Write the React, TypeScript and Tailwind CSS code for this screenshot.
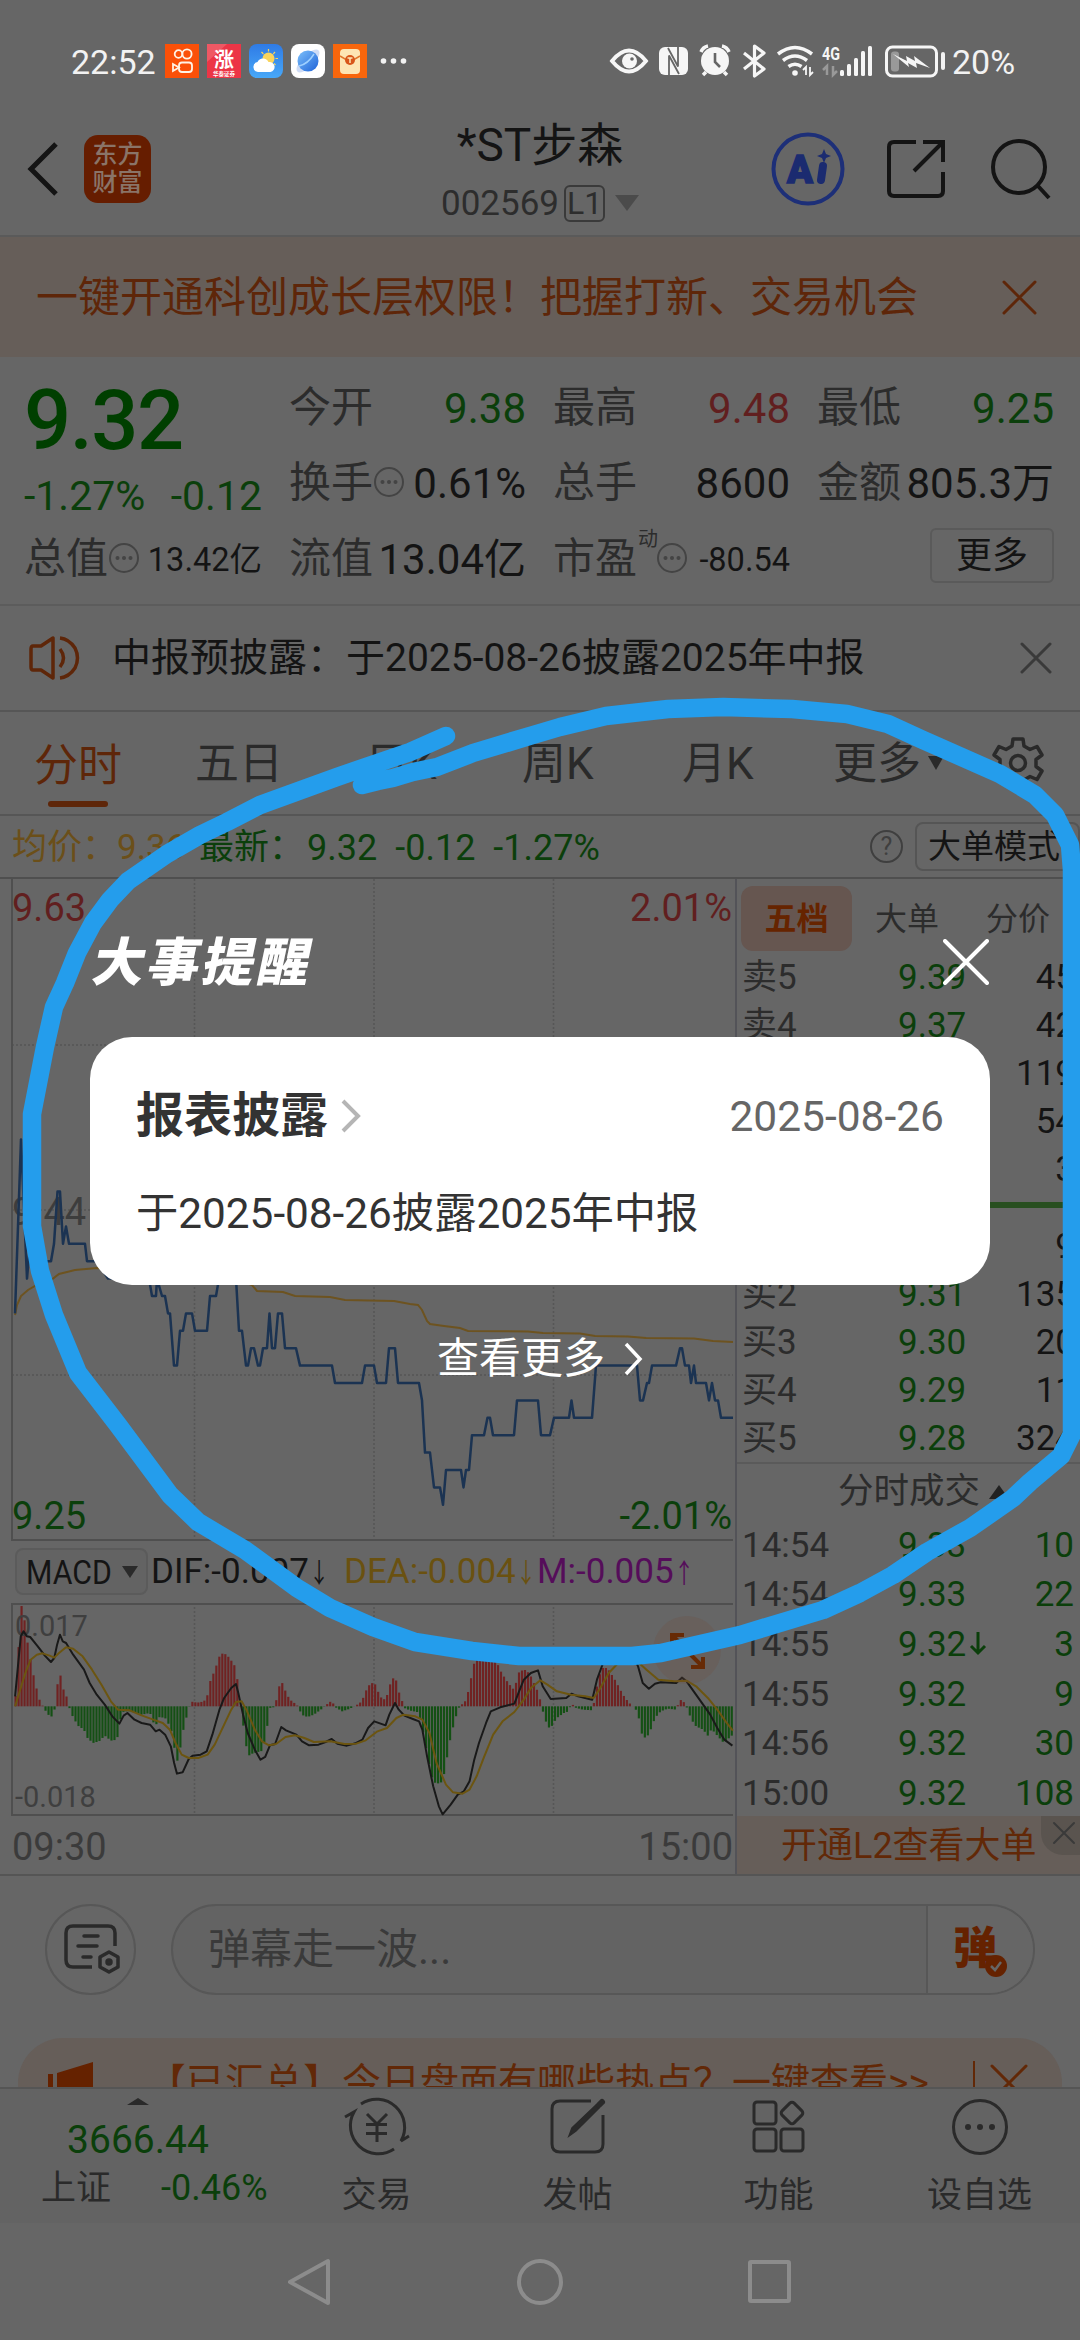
import React from 'react';

type Point = [number, number];

const UP = '#611f1f';
const DOWN = '#0b3f0b';

/* ---------------------------------- data ---------------------------------- */

// [x, ticks below the previous close]
const PRICE: Point[] = [
   [15, 6], [21, -4], [24, 0], [27, 4], [30, 2], [38, 3], [51, 3], [54, 2], [57.5, -1], [60, -1],
   [63, 2], [66, 1], [69, 2], [85, 2], [87, 3], [97, 3], [108, 4], [149, 4], [152, 5], [156, 5],
   [157, 4], [162, 5], [165, 5], [168, 6], [170, 6], [174, 9], [177, 9], [180, 7], [183, 7],
   [186, 6], [192, 6], [195, 7], [207, 7], [210, 5], [216, 5], [219, 4], [236, 4], [239, 7],
   [242, 7], [246, 9], [248, 9], [251, 8], [254, 8], [258, 9], [260, 9], [263, 8], [267, 8],
   [269.5, 6], [272, 8], [275, 8], [278, 6], [282, 6], [285, 8], [296, 8], [300, 9], [332, 9],
   [335, 10], [362, 10], [365, 9], [374, 9], [377, 10], [386, 10], [389, 8], [395, 8], [398, 10],
   [419, 10], [422, 11], [425, 14], [430, 14], [434, 16], [440, 16], [443, 17], [446, 15],
   [461, 15], [463.5, 16], [466, 15], [469, 15], [472, 13], [484, 13], [487.5, 12], [490, 12],
   [493, 13], [514, 13], [517, 11], [538, 11], [541, 13], [550, 13], [554, 12], [569, 12],
   [571.5, 11], [574, 12], [592, 12], [596, 9], [637, 9], [640, 11], [643, 11], [647, 10],
   [649, 10], [652, 9], [676, 9], [680, 8], [682, 8], [685, 9], [689, 9], [691, 10], [694, 9],
   [696, 10], [706, 10], [709, 11], [712, 10], [715, 11], [718, 11], [721, 12], [733, 12],
];

const AVERAGE: Point[] = [
   [15, 436], [17, 426], [21, 417], [28, 411], [35, 407], [46, 405], [59, 395], [75, 391],
   [97, 389], [190, 397], [236, 400], [252, 406], [257, 412], [283, 413], [295, 417], [330, 418],
   [345, 421], [394, 422], [410, 425], [418, 426], [422, 431], [427, 442], [430, 445], [444, 447],
   [460, 449], [468, 452], [528, 452.5], [543, 454], [580, 454.5], [595, 457], [628, 457.5],
   [646, 459], [694, 459.5], [713, 462], [733, 463],
];

// MACD pane uses a 1568 x 635 drawing space, zero line at 310
const BARS: Point[] = [
   [32, 300], [38, 170], [44, 2], [50, 27], [56, 100], [63, 155], [70, 210], [82, 285], [89, 305],
   [95, 320], [101, 333], [108, 343], [114, 330], [117, 310], [121, 250], [127, 208], [133, 255],
   [140, 275], [146, 310], [152, 335], [165, 368], [178, 380], [184, 403], [197, 420], [210, 415],
   [222, 398], [235, 413], [248, 410], [255, 350], [262, 325], [275, 325], [300, 335], [318, 330],
   [325, 358], [331, 365], [338, 342], [350, 345], [362, 375], [369, 430], [375, 478], [381, 445],
   [387, 390], [393, 355], [400, 315], [406, 296], [418, 299], [430, 296], [438, 288], [444, 240],
   [457, 195], [463, 165], [469, 152], [476, 152], [482, 158], [495, 182], [501, 200], [507, 290],
   [513, 340], [520, 415], [526, 460], [532, 452], [539, 452], [545, 445], [552, 450], [558, 430],
   [565, 385], [571, 315], [583, 312], [589, 262], [596, 232], [602, 255], [610, 280], [620, 298],
   [628, 302], [635, 323], [643, 338], [652, 342], [665, 335], [680, 320], [690, 307], [703, 293],
   [710, 312], [725, 325], [740, 318], [755, 307], [767, 295], [774, 267], [783, 245], [793, 237],
   [800, 262], [806, 282], [818, 292], [824, 252], [837, 215], [843, 258], [850, 285], [857, 315],
   [870, 323], [887, 328], [893, 365], [900, 410], [906, 462], [918, 538], [931, 542], [938, 535],
   [945, 485], [951, 430], [957, 390], [964, 352], [970, 322], [977, 302], [983, 307], [989, 278],
   [995, 255], [1001, 200], [1007, 170], [1014, 145], [1040, 125], [1050, 170], [1063, 210],
   [1077, 240], [1090, 262], [1098, 210], [1109, 200], [1116, 202], [1125, 220], [1141, 270],
   [1147, 305], [1153, 340], [1160, 368], [1166, 378], [1173, 360], [1180, 345], [1195, 330],
   [1205, 325], [1211, 298], [1217, 313], [1235, 320], [1256, 322], [1262, 270], [1268, 230],
   [1275, 195], [1287, 195], [1294, 210], [1305, 235], [1320, 275], [1332, 298], [1345, 315],
   [1352, 330], [1357, 375], [1363, 407], [1375, 395], [1388, 345], [1400, 325], [1415, 317],
   [1433, 320], [1438, 300], [1445, 287], [1452, 305], [1458, 320], [1464, 348], [1475, 370],
   [1490, 380], [1500, 398], [1508, 378], [1520, 398], [1534, 420], [1545, 405], [1553, 395],
];

const DIF: Point[] = [
   [32, 280], [38, 190], [44, 100], [50, 85], [57, 100], [64, 102], [80, 130], [95, 158],
   [108, 177], [115, 165], [121, 125], [127, 95], [133, 115], [140, 120], [155, 155], [178, 200],
   [190, 240], [205, 275], [222, 305], [238, 340], [253, 362], [262, 338], [270, 330], [285, 350],
   [300, 360], [318, 365], [330, 385], [338, 380], [350, 395], [362, 430], [369, 480], [375, 512],
   [387, 508], [400, 468], [408, 458], [425, 455], [438, 445], [450, 395], [465, 320], [475, 285],
   [490, 255], [500, 243], [505, 270], [515, 335], [525, 390], [540, 440], [552, 470], [562, 462],
   [572, 427], [583, 423], [596, 372], [606, 382], [628, 395], [640, 415], [655, 427], [675, 425],
   [690, 417], [703, 408], [715, 422], [735, 428], [755, 420], [768, 410], [780, 375], [793, 355],
   [817, 367], [825, 335], [837, 300], [845, 320], [857, 338], [875, 348], [888, 355], [895, 380],
   [905, 460], [918, 550], [930, 610], [938, 634], [955, 605], [970, 575], [983, 565], [995, 535],
   [1005, 470], [1015, 420], [1030, 360], [1040, 325], [1060, 313], [1090, 302], [1100, 265],
   [1110, 230], [1125, 210], [1140, 202], [1150, 250], [1167, 288], [1200, 285], [1211, 272],
   [1225, 280], [1255, 290], [1265, 230], [1278, 180], [1300, 140], [1340, 150], [1352, 190],
   [1362, 240], [1375, 257], [1388, 242], [1400, 238], [1433, 240], [1445, 224], [1455, 235],
   [1470, 265], [1490, 305], [1505, 335], [1520, 375], [1535, 410], [1552, 428],
];

const DEA: Point[] = [
   [32, 310], [45, 250], [55, 205], [65, 170], [78, 155], [90, 151], [105, 158], [115, 164],
   [125, 150], [140, 133], [155, 137], [175, 160], [195, 200], [215, 245], [235, 295], [250, 320],
   [275, 322], [300, 337], [325, 350], [345, 360], [360, 380], [372, 420], [385, 455], [400, 465],
   [420, 465], [440, 455], [455, 425], [475, 365], [490, 320], [500, 297], [512, 295], [522, 320],
   [540, 380], [555, 415], [570, 427], [585, 423], [605, 402], [625, 397], [645, 405], [665, 417],
   [700, 415], [730, 423], [755, 422], [775, 412], [800, 385], [820, 375], [840, 345], [855, 335],
   [880, 340], [895, 350], [910, 390], [925, 480], [945, 545], [960, 568], [980, 572], [995, 560],
   [1010, 520], [1025, 465], [1045, 395], [1065, 355], [1090, 327], [1110, 290], [1125, 255],
   [1145, 232], [1160, 245], [1180, 265], [1210, 275], [1240, 280], [1258, 285], [1270, 260],
   [1290, 210], [1310, 180], [1350, 175], [1370, 200], [1395, 230], [1430, 235], [1455, 233],
   [1475, 250], [1500, 285], [1520, 320], [1540, 360], [1553, 383],
];

const SELL = [
   ['卖5', '9.39', '45'],
   ['卖4', '9.37', '42'],
   ['卖3', '9.36', '119'],
   ['卖2', '9.35', '54'],
   ['卖1', '9.34', '3'],
];

const BUY = [
   ['买1', '9.32', '9'],
   ['买2', '9.31', '135'],
   ['买3', '9.30', '20'],
   ['买4', '9.29', '11'],
   ['买5', '9.28', '324'],
];

const TRADES = [
   ['14:54', '9.33', '10'],
   ['14:54', '9.33', '22'],
   ['14:55', '9.32', '3'],
   ['14:55', '9.32', '9'],
   ['14:56', '9.32', '30'],
   ['15:00', '9.32', '108'],
];

const toPoints = (list: Point[]) => list.map((p) => p.join(',')).join(' ');

const valueAt = (list: Point[], x: number) => {
   for (let i = 1; i < list.length; i++) {
      const [x0, y0] = list[i - 1];
      const [x1, y1] = list[i];
      if (x <= x1) return y0 + ((y1 - y0) * (x - x0)) / (x1 - x0);
   }
   return list[list.length - 1][1];
};

/* ---------------------------------- icons --------------------------------- */

interface CrossProps {
   size: number;
   color: string;
   width?: number;
}

const Cross: React.FC<CrossProps> = ({ size, color, width = 3 }) => (
   <svg width={size} height={size} viewBox={`0 0 ${size} ${size}`} className="shrink-0">
      <path
         d={`M2 2L${size - 2} ${size - 2}M${size - 2} 2L2 ${size - 2}`}
         stroke={color}
         strokeWidth={width}
         strokeLinecap="round"
      />
   </svg>
);

const InfoDots: React.FC = () => (
   <svg width="32" height="32" viewBox="0 0 32 32" className="shrink-0">
      <circle cx="16" cy="16" r="14" fill="none" stroke="#444" strokeWidth="2" />
      <g fill="#444">
         <circle cx="9.5" cy="16" r="2" />
         <circle cx="16" cy="16" r="2" />
         <circle cx="22.5" cy="16" r="2" />
      </g>
   </svg>
);

const AppIcons: React.FC = () => (
   <svg width="244" height="34" viewBox="0 0 244 34" className="ml-[10px]">
      <defs>
         <linearGradient id="sky" x1="0" y1="0" x2="0" y2="1">
            <stop offset="0" stopColor="#2f7be6" />
            <stop offset="1" stopColor="#48a8f8" />
         </linearGradient>
         <linearGradient id="globe" x1="0" y1="0" x2="1" y2="1">
            <stop offset="0" stopColor="#7cc0fb" />
            <stop offset="1" stopColor="#1e62d8" />
         </linearGradient>
      </defs>
      {/* camera */}
      <rect width="34" height="34" fill="#fb5008" />
      <g fill="none" stroke="#fff3e6" strokeWidth="1.8">
         <circle cx="13.5" cy="10" r="3.8" />
         <circle cx="22" cy="10" r="4.6" />
         <rect x="14" y="18.5" width="13" height="9.5" rx="3" />
         <path d="M14 23.5l-6-3.5v7z" />
      </g>
      {/* rising */}
      <rect x="42" width="34" height="34" fill="#ec3546" />
      <path d="M42 0h20L42 18z" fill="#f27078" opacity=".6" />
      <text x="59" y="23" textAnchor="middle" fontSize="20" fontWeight="700" fill="#fff">涨</text>
      <text x="59" y="31.5" textAnchor="middle" fontSize="5.5" fontWeight="700" fill="#fff">华泰证券</text>
      {/* weather */}
      <rect x="84" width="34" height="34" rx="8" fill="url(#sky)" />
      <circle cx="103.5" cy="14.5" r="6" fill="#f9d45c" />
      <path
         d="M103.5 5v2.5M110 8l-1.7 1.900M96.5 8l1.8 1.900M113 14.5h-2.5M110.5 21l-1.5-1.5"
         stroke="#f9d45c"
         strokeWidth="1.2"
      />
      <path d="M93 28a5 5 0 0 1-.5-9.900A6 6 0 0 1 103.500 18a5 5 0 0 1 2 10z" fill="#fff" />
      {/* browser */}
      <rect x="126" width="34" height="34" rx="8" fill="#fff" />
      <ellipse cx="143" cy="17" rx="15" ry="6" fill="#cfdcf5" transform="rotate(-45 143 17)" />
      <circle cx="143" cy="17" r="10.5" fill="url(#globe)" />
      <path d="M134 22q9-2 15-12" stroke="#9ed0ff" strokeWidth="1.5" fill="none" />
      {/* red packet */}
      <rect x="168" width="34" height="34" fill="#f8660c" />
      <rect x="175" y="5" width="20" height="25" rx="4" fill="#fde5b4" />
      <path d="M175 12l10 6 10-6" stroke="#e0762c" strokeWidth="1.5" fill="none" />
      <circle cx="185" cy="16" r="5" fill="#d8561a" />
      <path d="M182.5 14h5M185 14v5" stroke="#fde5b4" strokeWidth="1.5" />
      {/* more */}
      <g fill="#f2f2f2">
         <circle cx="218.5" cy="17" r="2.8" />
         <circle cx="228.5" cy="17" r="2.8" />
         <circle cx="238.5" cy="17" r="2.8" />
      </g>
   </svg>
);

const SystemIcons: React.FC = () => (
   <svg width="340" height="50" viewBox="0 0 340 50" fill="none" stroke="#f6f6f6" strokeWidth="3.5">
      {/* eye */}
      <path d="M11 25Q28 4 45 25Q28 46 11 25z" strokeWidth="3.8" />
      <circle cx="28.5" cy="25" r="7.5" fill="#f6f6f6" stroke="none" />
      <circle cx="31" cy="23" r="1.8" fill="#666" stroke="none" />
      {/* nfc */}
      <rect x="58" y="11" width="29" height="28" rx="6" fill="#f6f6f6" stroke="none" />
      <path d="M68 39V19.5l10 18.5M77 11v19.5L67 12" stroke="#666" strokeWidth="1.8" />
      {/* alarm */}
      <circle cx="114" cy="25" r="14" fill="#f6f6f6" stroke="none" />
      <path d="M114 17v9l5 5" stroke="#666" strokeWidth="2.6" />
      <path d="M100 16q2-5 7-6M128 16q-2-5-7-6M105 36l-3 3M123 36l3 3" />
      {/* bluetooth */}
      <path d="M143 17l20 16-9.5 7V10l9.5 7-20 16" strokeWidth="3.2" strokeLinejoin="round" />
      {/* wifi */}
      <path d="M177 18q17-13 34 0M182 24.5q12-9 24 0M187.5 30.5q6.5-4.5 13 0" />
      <circle cx="194" cy="37" r="2.8" fill="#f6f6f6" stroke="none" />
      <path d="M205 39v-8l-3 3M209 31v8l3-3" strokeWidth="1.8" />
      {/* mobile signal */}
      <text x="221" y="24" fontSize="18" fontWeight="700" fill="#f6f6f6" stroke="none" textLength="18" lengthAdjust="spacingAndGlyphs">4G</text>
      <path d="M226 39v-9l-4 4M232 30v9l4-4" stroke="#999" strokeWidth="2.5" />
      <g fill="#f6f6f6" stroke="none">
         <rect x="239" y="34" width="4" height="6" rx="1.5" />
         <rect x="246" y="28" width="4" height="12" rx="1.5" />
         <rect x="253" y="22" width="4" height="18" rx="1.5" />
         <rect x="260" y="15" width="4" height="25" rx="1.5" />
         <rect x="267" y="10" width="4" height="30" rx="1.5" />
      </g>
      {/* battery */}
      <rect x="285.5" y="11" width="50" height="29" rx="6" strokeWidth="3" />
      <rect x="290" y="15.5" width="8" height="20" rx="3" fill="#999" stroke="none" />
      <path d="M292 18l14 7-1-5 9 5-1-5 16 12-14-5 1 5-9-5 1 4z" fill="#f6f6f6" stroke="none" />
   </svg>
);

/* --------------------------------- sections -------------------------------- */

const StatusBar: React.FC = () => (
   <div className="flex h-[86px] shrink-0 items-center pt-9 text-[#f2f2f2]">
      <span className="ml-[71px] w-[84px] pt-px text-[34px]">22:52</span>
      <AppIcons />
      <div className="ml-[192px] flex items-center">
         <SystemIcons />
         <span className="h-[18px] w-1 rounded bg-[#f2f2f2]" />
         <span className="ml-[7px] pt-[2px] text-[34px]">20%</span>
      </div>
   </div>
);

const Header: React.FC = () => (
   <div className="flex h-[151px] shrink-0 items-center border-b-2 border-[#5a5a5a] pt-[16px]">
      <svg width="34" height="56" viewBox="0 0 34 56" className="ml-[26px]">
         <path d="M30 3L5 28l25 25" fill="none" stroke="#141414" strokeWidth="5" />
      </svg>
      <div className="ml-6 flex h-[68px] w-[67px] flex-col items-center justify-center rounded-[14px] bg-[#661d00] text-[25px] font-medium leading-[28px] text-[#8a7468]">
         <span>东方</span>
         <span>财富</span>
      </div>
      <div className="ml-[229px] flex w-[320px] flex-col items-center pt-[6px]">
         <span className="text-[46px] text-[#141414]">*ST步森</span>
         <div className="mt-[17px] flex items-center text-[35px] text-[#2d2d2d]">
            002569
            <span className="ml-[5px] flex h-[37px] w-[41px] items-center justify-center rounded-md border-2 border-[#3a3a3a] text-[32px]">
               L1
            </span>
            <svg width="24" height="16" viewBox="0 0 24 16" className="ml-[10px]">
               <path d="M0 0h24L12 16z" fill="#4b4b4b" />
            </svg>
         </div>
      </div>
      <svg width="76" height="76" viewBox="0 0 76 76" className="ml-[70px]">
         <circle cx="38" cy="38" r="34.5" fill="none" stroke="#1d2f78" strokeWidth="4" />
         <text x="30" y="52" textAnchor="middle" fontSize="38" fontWeight="900" fill="#1b2b70" stroke="#1b2b70" strokeWidth="1.5">A</text>
         <path d="M53 35l-2 14" stroke="#1b2b70" strokeWidth="8" strokeLinecap="round" />
         <path d="M54 18l2 5 5 2-5 2-2 5-2-5-5-2 5-2z" fill="#1b2b70" />
      </svg>
      <svg width="62" height="62" viewBox="0 0 62 62" className="ml-[39px]" fill="none" stroke="#141414" strokeWidth="4">
         <path d="M31 4H9Q4 4 4 9v44q0 5 5 5h44q5 0 5-5V34" />
         <path d="M38 4h20v20M58 4L29 33" />
      </svg>
      <svg width="64" height="64" viewBox="0 0 64 64" className="ml-[42px]" fill="none" stroke="#141414" strokeWidth="4">
         <circle cx="30" cy="30" r="26" />
         <path d="M49 49l11 12" />
      </svg>
   </div>
);

const Promo: React.FC = () => (
   <div className="flex h-[120px] shrink-0 items-center justify-between bg-[#665e59] pl-[36px] pr-[43px] text-[42px] text-[#5e2609]">
      <span className="pt-[2px]">一键开通科创成长层权限！把握打新、交易机会</span>
      <Cross size={35} color="#5e2609" />
   </div>
);

interface QuoteCellProps {
   label: string;
   value: string;
   color?: string;
   info?: boolean;
   small?: boolean;
   mark?: string;
}

const QuoteCell: React.FC<QuoteCellProps> = ({ label, value, color = '#141414', info, small, mark }) => (
   <div className="flex h-[75.5px] items-center">
      <span className="pt-[2px] text-[42px] text-[#2c2c2c]">{label}</span>
      {mark && <span className="-mr-[2px] mb-[38px] ml-px text-[20px] text-[#2c2c2c]">{mark}</span>}
      {info && <InfoDots />}
      <span className={small ? 'ml-auto pt-1 text-[32.5px]' : 'ml-auto pt-1 text-[42px]'} style={{ color }}>
         {value}
      </span>
   </div>
);

const Quote: React.FC = () => (
   <div className="grid h-[249px] shrink-0 grid-cols-[238px_237px_237px_237px] gap-x-[27px] border-b-2 border-[#5c5c5c] pl-[24px] pt-[12px]">
      <div>
         <div className="flex h-[102px] items-center text-[83px] font-medium tracking-[-1.5px] text-[#003f00]">9.32</div>
         <div className="flex h-[49px] items-center justify-between pt-[2px] text-[41px] text-[#0b3f0b]">
            <span>-1.27%</span>
            <span>-0.12</span>
         </div>
         <QuoteCell label="总值" value="13.42亿" info small />
      </div>
      <div>
         <QuoteCell label="今开" value="9.38" color={DOWN} />
         <QuoteCell label="换手" value="0.61%" info />
         <QuoteCell label="流值" value="13.04亿" />
      </div>
      <div>
         <QuoteCell label="最高" value="9.48" color={UP} />
         <QuoteCell label="总手" value="8600" />
         <QuoteCell label="市盈" mark="动" value="-80.54" info small />
      </div>
      <div>
         <QuoteCell label="最低" value="9.25" color={DOWN} />
         <QuoteCell label="金额" value="805.3万" />
         <div className="ml-auto mt-[8px] flex h-[55px] w-[124px] items-center justify-center rounded-md border-2 border-[#5a5a5a] text-[36px] text-[#141414]">
            更多
         </div>
      </div>
   </div>
);

const Notice: React.FC = () => (
   <div className="flex h-[106px] shrink-0 items-center border-b-2 border-[#565656] text-[39px] text-[#141414]">
      <svg width="54" height="48" viewBox="0 0 54 48" className="ml-[29px]" fill="none" stroke="#5e2609" strokeWidth="3.5">
         <path d="M4 12h8L24 4v40L12 36H4q-2 0-2-3V15q0-3 2-3z" strokeLinejoin="round" />
         <path d="M31 15q7 9 0 18M31 4q9 1 15 10 5 10 0 20-6 9-15 10" />
      </svg>
      <span className="ml-[29px] pt-px">中报预披露：于2025-08-26披露2025年中报</span>
      <span className="ml-auto mr-[28px]">
         <Cross size={32} color="#3a3a3a" />
      </span>
   </div>
);

const Tabs: React.FC = () => (
   <div className="flex h-[104px] shrink-0 items-center border-b-2 border-[#565656] text-[44px] text-[#2a2a2a]">
      <div className="ml-[34px] flex h-full w-[88px] flex-col items-center pt-[32px] text-[#5e2609]">
         <span>分时</span>
         <span className="mt-[13px] h-[6px] w-[60px] rounded bg-[#5e2609]" />
      </div>
      <span className="ml-[73px] w-[170px] pt-[2px]">五日</span>
      <span className="w-[157px] pt-[2px]">日K</span>
      <span className="w-[160px] pt-[2px]">周K</span>
      <span className="w-[151px] pt-[2px]">月K</span>
      <span className="pt-[2px]">更多</span>
      <svg width="16" height="14" viewBox="0 0 16 14" className="ml-[7px]">
         <path d="M0 0h16L8 14z" fill="#2a2a2a" />
      </svg>
      <svg width="54" height="54" viewBox="0 0 54 54" className="ml-[47px]" fill="none" stroke="#2a2a2a" strokeWidth="3.5" strokeLinejoin="round">
         <path d="M22 3h10l1 7 6 3.5 7-3 5 8.5-6 4.5v7l6 4.5-5 8.5-7-3-6 3.5-1 7H22l-1-7-6-3.5-7 3L3 35l6-4.5v-7L3 19l5-8.5 7 3 6-3.5z" />
         <circle cx="27" cy="27" r="7.5" />
      </svg>
   </div>
);

const InfoRow: React.FC = () => (
   <div className="flex h-[63px] shrink-0 items-center overflow-hidden border-b-2 border-[#4f4f4f] text-[35px]">
      <span className="ml-[12px] w-[187px] pt-[2px] text-[#6b4f19]">均价：9.36</span>
      <span className="pt-[2px] text-[#0b3f0b]">最新：</span>
      <span className="ml-[3px] pt-[2px] text-[36px] text-[#0b3f0b]">9.32</span>
      <span className="ml-[18px] pt-[2px] text-[36px] text-[#0b3f0b]">-0.12</span>
      <span className="ml-[18px] pt-[2px] text-[36px] text-[#0b3f0b]">-1.27%</span>
      <span className="ml-auto flex h-[33px] w-[33px] items-center justify-center rounded-full border-2 border-[#3f3f3f] text-[25px] text-[#3f3f3f]">
         ?
      </span>
      <span className="ml-[12px] flex h-[49px] w-[165px] shrink-0 items-center rounded-lg border-2 border-[#555] pl-[11px] text-[33px] text-[#141414]">
         大单模式
      </span>
   </div>
);

const PriceChart: React.FC = () => (
   <svg width="735" height="662" viewBox="0 0 735 662" className="block shrink-0" fill="none">
      <g stroke="#565656" strokeWidth="1.5" strokeDasharray="2 2">
         <path d="M194.5 0v662M374 0v662M553.5 0v662M12 166h721M12 331h721M12 496h721" />
      </g>
      <path d="M12 0v661h721" stroke="#4f4f4f" strokeWidth="2" />
      <text x="12" y="346" fontSize="38" fill="#3d3d3d">9.44</text>
      <polyline points={toPoints(AVERAGE)} stroke="#6d5320" strokeWidth="2" />
      <polyline
         points={toPoints(PRICE.map(([x, n]) => [x, 330 + n * 17.4] as Point))}
         stroke="#1b3352"
         strokeWidth="2.5"
         strokeLinejoin="round"
      />
      <g fontSize="38">
         <text x="12" y="42" fill={UP}>9.63</text>
         <text x="732" y="42" fill={UP} textAnchor="end">2.01%</text>
         <text x="12" y="650" fill={DOWN}>9.25</text>
         <text x="732" y="650" fill={DOWN} textAnchor="end">-2.01%</text>
      </g>
   </svg>
);

const MacdChart: React.FC = () => {
   const bars = Array.from({ length: 240 }, (_, i) => 33 + i * 6.35);

   return (
      <svg width="735" height="214" viewBox="0 0 735 214" className="block shrink-0" fill="none">
         <path d="M194.5 0v212M374 0v212M553.5 0v212" stroke="#565656" strokeWidth="1.5" strokeDasharray="2 2" />
         <path d="M733 1H12v211h721" stroke="#4f4f4f" strokeWidth="2" />
         <g transform="scale(.4719 .3333)">
            {bars.map((x) => {
               const y = valueAt(BARS, x);
               return <path key={x} d={`M${x} 310V${y}`} stroke={y < 310 ? '#702222' : '#145014'} strokeWidth="4.6" />;
            })}
         </g>
         <text x="15" y="33" fontSize="29" fill="#3f3f3f">0.017</text>
         <text x="15" y="204" fontSize="29" fill="#3f3f3f">-0.018</text>
         <g transform="scale(.4719 .3333)" strokeWidth="2" strokeLinejoin="round">
            <polyline points={toPoints(DIF)} stroke="#191919" vectorEffect="non-scaling-stroke" />
            <polyline points={toPoints(DEA)} stroke="#6c5510" vectorEffect="non-scaling-stroke" />
         </g>
         <circle cx="687" cy="47" r="34" fill="#71513f" opacity=".25" />
         <path d="M672 42V32h12M672 32l12 12M703 54v10h-12M703 64L691 52" stroke="#672a05" strokeWidth="4" />
      </svg>
   );
};

const Arrow: React.FC<{ children: string }> = ({ children }) => (
   <span className="inline-block w-[16px] origin-left scale-x-75 text-[27px]">{children}</span>
);

const ChartColumn: React.FC = () => (
   <div className="flex w-[735px] shrink-0 flex-col">
      <PriceChart />
      <div className="flex h-[62px] shrink-0 items-center pb-px text-[35px] text-[#141414]">
         <div className="ml-[15px] flex h-[47px] w-[133px] shrink-0 items-center rounded-lg border-2 border-[#5b5b5b] bg-[#636363] pl-[9px] text-[34px]">
            <span className="w-[96px] origin-left scale-x-[0.89]">MACD</span>
            <svg width="16" height="12" viewBox="0 0 16 12">
               <path d="M0 0h16L8 12z" fill="#2a2a2a" />
            </svg>
         </div>
         <span className="ml-[3px] w-[193px] shrink-0 whitespace-nowrap">DIF:-0.007<Arrow>↓</Arrow></span>
         <span className="w-[193px] shrink-0 whitespace-nowrap text-[#6a5110]">DEA:-0.004<Arrow>↓</Arrow></span>
         <span className="whitespace-nowrap text-[#550d5a]">M:-0.005<Arrow>↑</Arrow></span>
      </div>
      <MacdChart />
      <div className="flex flex-1 items-center justify-between pl-[12px] pr-[2px] pt-[2px] text-[38px] text-[#3b3b3b]">
         <span>09:30</span>
         <span>15:00</span>
      </div>
   </div>
);

interface BookRowProps {
   row: string[];
}

const BookRow: React.FC<BookRowProps> = ({ row }) => (
   <div className="grid h-12 grid-cols-[156px_1fr_auto] items-center pt-px text-[35px]">
      <span className="text-[#2c2c2c]">{row[0]}</span>
      <span className="text-[#0b3f0b]">{row[1]}</span>
      <span className="text-[#141414]">{row[2]}</span>
   </div>
);

const OrderBook: React.FC = () => (
   <div className="flex min-w-0 flex-1 flex-col border-l-2 border-[#535358]">
      <div className="flex h-[74px] shrink-0 items-center text-[32px] text-[#2c2c2c]">
         <div className="ml-[4px] mt-1 flex h-[65px] w-[111px] items-center justify-center rounded-xl bg-[#665650] pt-[2px] font-bold text-[#662400]">
            五档
         </div>
         <span className="ml-[23px] mt-[6px]">大单</span>
         <span className="ml-[47px] mt-[6px]">分价</span>
      </div>
      <div className="shrink-0 pl-[5px] pr-[5px]">
         {SELL.map((row) => (
            <BookRow key={row[0]} row={row} />
         ))}
      </div>
      <div className="mb-[14px] mt-[9px] flex h-[6px] shrink-0">
         <span className="w-[45%] bg-[#611f1f]" />
         <span className="flex-1 bg-[#284f20]" />
      </div>
      <div className="shrink-0 pl-[5px] pr-[5px]">
         {BUY.map((row) => (
            <BookRow key={row[0]} row={row} />
         ))}
      </div>
      <div className="flex h-[58px] shrink-0 items-center border-t-2 border-[#5a5a5a] pl-[101px] text-[35.5px] text-[#2c2c2c]">
         分时成交
         <svg width="20" height="14" viewBox="0 0 20 14" className="ml-[9px]">
            <path d="M10 0l10 14H0z" fill="#222" />
         </svg>
      </div>
      <div className="min-h-0 flex-1 pl-[5px] pr-[6px]">
         {TRADES.map((row, i) => (
            <div key={i} className="grid h-[49.6px] grid-cols-[156px_1fr_auto] items-center pt-px text-[35px] text-[#0b3f0b]">
               <span className="text-[#2c2c2c]">{row[0]}</span>
               <span className="flex items-center">
                  {row[1]}
                  {i === 2 && (
                     <svg width="18" height="24" viewBox="0 0 18 24" className="ml-[3px]" fill="none" stroke="#0b3f0b" strokeWidth="3">
                        <path d="M9 0v21M2 14l7 7 7-7" />
                     </svg>
                  )}
               </span>
               <span>{row[2]}</span>
            </div>
         ))}
      </div>
      <div className="flex h-[58px] shrink-0 justify-between bg-[#665e59]">
         <span className="pl-[44px] pt-[12px] text-[36px] text-[#622807]">开通L2查看大单</span>
         <span className="flex h-[39px] w-[39px] items-center justify-center rounded-bl-[22px] bg-[#5a544f] pl-[6px] pb-[6px]">
            <Cross size={24} color="#3a3a3a" width={2} />
         </span>
      </div>
   </div>
);

const CommentBar: React.FC = () => (
   <div className="flex h-[213px] shrink-0 flex-col overflow-hidden border-t-2 border-[#555]">
      <div className="ml-[45px] mt-[28px] flex h-[91px] shrink-0">
         <div className="flex h-[91px] w-[91px] items-center justify-center rounded-full border-2 border-[#575757]">
            <svg width="58" height="54" viewBox="0 0 58 54" fill="none" stroke="#2a2a2a" strokeWidth="3.5">
               <path d="M30 44H11q-7 0-7-7V10q0-7 7-7h35q7 0 7 7v13" />
               <path d="M22 13h14M16 23h19M21 34h8" strokeLinecap="round" />
               <path d="M47 29l9 5v10l-9 5-9-5V34z" strokeLinejoin="round" />
               <circle cx="47" cy="39" r="2" />
            </svg>
         </div>
         <div className="ml-[35px] flex h-[91px] w-[864px] items-center overflow-hidden rounded-full border-2 border-[#575757] bg-[#636363]">
            <span className="flex-1 pl-[35px] text-[42px] text-[#3a3a3a]">弹幕走一波...</span>
            <div className="flex h-full w-[107px] items-center border-l-2 border-[#575757] bg-[#666] pl-[25px] text-[#652200]">
               <span className="mb-[2px] text-[44px] font-black">弹</span>
               <svg width="22" height="22" viewBox="0 0 22 22" className="-ml-[12px] mt-[32px]">
                  <circle cx="11" cy="11" r="11" fill="#652200" />
                  <path d="M6 11l4 4 6-8" stroke="#666" strokeWidth="2.5" fill="none" />
               </svg>
            </div>
         </div>
      </div>
      <div className="mx-[18px] mt-[43px] flex h-[90px] shrink-0 items-center rounded-[45px] bg-[#665e59] text-[39px] text-[#622807]">
         <svg width="46" height="44" viewBox="0 0 46 44" className="ml-[30px]">
            <path d="M0 13h5v20H0zM9 12L45 1v42L9 33z" fill="#652200" />
         </svg>
         <span className="ml-[53px]">【已汇总】今日盘面有哪些热点？一键查看&gt;&gt;</span>
         <span className="ml-auto h-[44px] w-[2px] bg-[#622807]" />
         <span className="ml-[15px] mr-[34px]">
            <Cross size={38} color="#622807" />
         </span>
      </div>
   </div>
);

interface NavItemProps {
   label: string;
   children: React.ReactNode;
}

const NavItem: React.FC<NavItemProps> = ({ label, children }) => (
   <div className="flex w-[201px] shrink-0 flex-col items-center pt-[4px]">
      <svg width="68" height="68" viewBox="0 0 68 68" fill="none" stroke="#2a2a2a" strokeWidth="3">
         {children}
      </svg>
      <span className="mt-[17px] text-[35px] text-[#2a2a2a]">{label}</span>
   </div>
);

const BottomNav: React.FC = () => (
   <div className="flex h-[136px] shrink-0 border-t-2 border-[#555] bg-[#636363]">
      <div className="flex w-[276px] flex-col items-center pt-[9px]">
         <svg width="22" height="7" viewBox="0 0 22 7">
            <path d="M11 0l11 7H0z" fill="#2a2a2a" />
         </svg>
         <span className="mt-[16px] text-[39px] text-[#0b3f0b]">3666.44</span>
         <div className="mt-[10px] flex w-full items-center pl-[41px] text-[35px] text-[#2a2a2a]">
            上证
            <span className="ml-[50px] text-[36px] text-[#0b3f0b]">-0.46%</span>
         </div>
      </div>
      <NavItem label="交易">
         <path d="M18 11A28 28 0 0 1 58 48l8-5" />
         <path d="M51 56A28 28 0 0 1 11 19l-9 5" />
         <path d="M24 21l10 10 10-10M23 31.5h21M23 40.5h21M34 31v18" />
      </NavItem>
      <NavItem label="发帖">
         <path d="M47 8H16q-8 0-8 8v35q0 8 8 8h35q8 0 8-8V22" />
         <path d="M25 43l3-8 24-23 3 3-23 23z" fill="#2a2a2a" strokeWidth="1.5" />
         <path d="M55 12l3-3" strokeWidth="6" strokeLinecap="round" />
      </NavItem>
      <NavItem label="功能">
         <rect x="9" y="9" width="22" height="22" rx="3" />
         <rect x="9" y="36" width="22" height="22" rx="3" />
         <rect x="36" y="36" width="22" height="22" rx="3" />
         <rect x="38.5" y="11.5" width="17" height="17" rx="3" transform="rotate(45 47 20)" />
      </NavItem>
      <NavItem label="设自选">
         <circle cx="34" cy="34" r="26.5" />
         <g fill="#2a2a2a" stroke="none">
            <circle cx="22" cy="34" r="3" />
            <circle cx="34" cy="34" r="3" />
            <circle cx="46" cy="34" r="3" />
         </g>
      </NavItem>
   </div>
);

const SystemNav: React.FC = () => (
   <div className="flex h-[117px] shrink-0 items-center justify-center gap-[182px]">
      <svg width="48" height="48" viewBox="0 0 48 48" fill="none" stroke="#8c8c8c" strokeWidth="4">
         <path d="M42 3v42L4 24z" strokeLinejoin="round" />
      </svg>
      <svg width="48" height="48" viewBox="0 0 48 48" fill="none" stroke="#8c8c8c" strokeWidth="4">
         <circle cx="24" cy="24" r="21" />
      </svg>
      <svg width="48" height="48" viewBox="0 0 48 48" fill="none" stroke="#8c8c8c" strokeWidth="4">
         <rect x="4" y="4" width="39" height="39" rx="1" />
      </svg>
   </div>
);

const Reminder: React.FC = () => (
   <div className="absolute left-[90px] top-[936px] w-[900px]">
      <div className="flex h-[52px] items-center justify-between pl-[4px] pr-[1px] text-white">
         <span className="-skew-x-12 pt-[4px] text-[52px] font-black tracking-[3px]">大事提醒</span>
         <Cross size={46} color="#fff" width={4} />
      </div>
      <div className="mt-[49px] flex h-[248px] flex-col rounded-[42px] bg-white px-[46px] pt-[55px]">
         <div className="flex items-center">
            <span className="text-[48px] font-bold text-[#333]">报表披露</span>
            <svg width="22" height="34" viewBox="0 0 22 34" className="ml-[12px]">
               <path d="M3 2l15 15L3 32" fill="none" stroke="#b5b5b5" strokeWidth="4" />
            </svg>
            <span className="ml-auto pt-[2px] text-[42.5px] text-[#666]">2025-08-26</span>
         </div>
         <span className="mt-[53px] text-[42.3px] text-[#333]">于2025-08-26披露2025年中报</span>
      </div>
      <div className="mt-[53px] flex items-center justify-center text-[42px] text-white">
         查看更多
         <svg width="20" height="34" viewBox="0 0 20 34" className="ml-[18px]">
            <path d="M3 2l14 15L3 32" fill="none" stroke="#fff" strokeWidth="3.5" />
         </svg>
      </div>
   </div>
);

// hand-drawn marker stroke around the reminder
const Marker: React.FC = () => (
   <svg width="1080" height="2340" viewBox="0 0 1080 2340" className="pointer-events-none absolute left-0 top-0">
      <path
         d="M446 736L410 752L360 769L337 777L293 793L260 805L227 822L200 835L167 854L128 881L110 900L93 923L77 953L65 983L54 1007L45 1047L32 1114L32 1226L40 1271L54 1315L78 1373L118 1425L170 1495L198 1522L245 1550L297 1588L330 1608L373 1627L415 1642L472 1651L519 1656L632 1656L661 1653L740 1635L823 1610L860 1593L893 1575L927 1552L970 1528L1013 1498L1030 1482L1061 1456L1072 1434L1072 870L1070 845L1055 815L1035 795L1000 774L923 740L888 724L847 714L792 709L723 707L668 709L606 716L560 727L533 735L473 753L437 767L413 772L393 778L378 781L362 785"
         fill="none"
         stroke="#249dec"
         strokeWidth="18.5"
         strokeLinejoin="round"
         strokeLinecap="round"
      />
   </svg>
);

const App: React.FC = () => {
   return (
      <div className="relative flex h-[2340px] w-[1080px] flex-col overflow-hidden bg-[#666] font-['Roboto','Noto_Sans_CJK_SC',sans-serif] leading-none">
         <StatusBar />
         <Header />
         <Promo />
         <Quote />
         <Notice />
         <Tabs />
         <InfoRow />
         <div className="flex h-[995px] shrink-0">
            <ChartColumn />
            <OrderBook />
         </div>
         <CommentBar />
         <BottomNav />
         <SystemNav />
         <Reminder />
         <Marker />
      </div>
   );
};

export default App;
